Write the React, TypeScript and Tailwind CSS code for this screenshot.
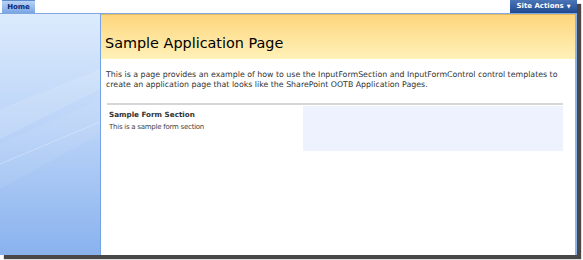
export default function App() {
  return (
    <div className="w-[583px] h-[260px] bg-white overflow-hidden" style={{ fontFamily: '"DejaVu Sans", Verdana, sans-serif' }}>
      <div className="w-[577px] h-[255px] flex flex-col bg-white shadow-[4px_4px_1px_rgba(40,40,40,0.85)]">
        {/* Top bar */}
        <div className="h-[13px] flex items-stretch justify-between bg-white">
          <div className="ml-[2px] w-[33px] flex items-center justify-center bg-gradient-to-b from-[#b9d2f3] to-[#7aa6e4] border-t border-[#5d8bd0] text-[7px] font-bold text-[#0b2a7a] leading-none">
            Home
          </div>
          <div className="w-[67px] flex items-center justify-center gap-[3px] bg-gradient-to-b from-[#4a76b8] to-[#21488f] text-[7px] font-bold text-white leading-none">
            Site Actions
            <span className="text-[5px]">▼</span>
          </div>
        </div>

        <div className="flex-1 flex border-t border-[#7fa8e0]">
          {/* Left nav */}
          <div className="w-[101px] relative overflow-hidden border-r border-[#76a3e4] bg-gradient-to-b from-[#dcebfd] via-[#b8d2f7] to-[#89b2ee]">
            <svg className="absolute inset-0" width="100" height="242" viewBox="0 0 100 242">
              <path d="M0 95 L100 55 L100 75 L0 125 Z" fill="#ffffff" opacity="0.12" />
              <path d="M0 150 L100 108" stroke="#ffffff" strokeWidth="0.7" opacity="0.4" />
              <path d="M0 130 L100 85 L100 120 L0 175 Z" fill="#ffffff" opacity="0.06" />
            </svg>
          </div>

          {/* Content */}
          <div className="flex-1 flex flex-col border-r-2 border-[#8db3ea]">
            <div className="h-[45px] flex items-end pb-[9px] pl-[4px] bg-gradient-to-b from-[#fdd67c] to-[#fff1b8] border-t border-[#e0b866]">
              <h1 className="text-[14.4px] leading-none text-black">Sample Application Page</h1>
            </div>

            <div className="pl-[5px] pr-[8px] pt-[11px] text-[7.85px] leading-[10px] text-[#333] whitespace-nowrap">
              <p>
                This is a page provides an example of how to use the InputFormSection and InputFormControl control templates to
                <br />
                create an application page that looks like the SharePoint OOTB Application Pages.
              </p>
            </div>

            <div className="ml-[6px] mr-[12px] mt-[13px] border-t-2 border-[#d6d6d6] flex">
              <div className="w-[196px] pl-[2px] pt-[6px]">
                <div className="text-[7.2px] font-bold text-[#333] leading-none">Sample Form Section</div>
                <div className="mt-[6px] text-[7px] text-[#444] leading-none tracking-[-0.25px]">This is a sample form section</div>
              </div>
              <div className="flex-1 h-[45px] mt-[1px] bg-[#eef2fe]" />
            </div>
          </div>
        </div>
      </div>
    </div>
  );
}
